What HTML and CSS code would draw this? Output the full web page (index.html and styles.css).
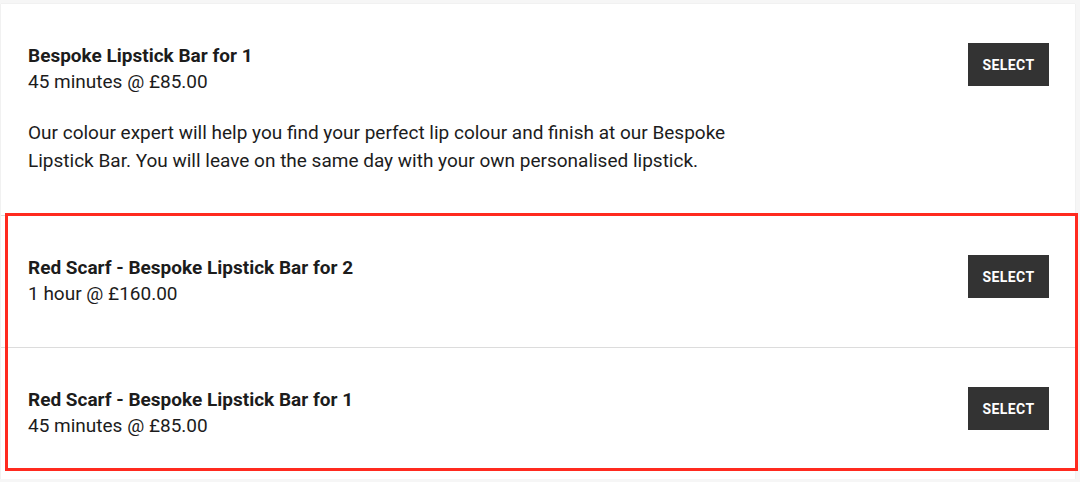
FILE: index.html
```html
<!DOCTYPE html>
<html>
<head>
<meta charset="utf-8">
<link rel="stylesheet" href="styles.css">
</head>
<body>
<div class="card">
  <div class="row">
    <div class="info">
      <div class="title">Bespoke Lipstick Bar for 1</div>
      <div class="meta">45 minutes @ £85.00</div>
      <p class="desc">Our colour expert will help you find your perfect lip colour and finish at our Bespoke Lipstick Bar. You will leave on the same day with your own personalised lipstick.</p>
    </div>
    <button class="btn">SELECT</button>
  </div>
  <div class="group">
    <div class="row">
      <div class="info">
        <div class="title">Red Scarf - Bespoke Lipstick Bar for 2</div>
        <div class="meta">1 hour @ £160.00</div>
      </div>
      <button class="btn">SELECT</button>
    </div>
    <div class="row">
      <div class="info">
        <div class="title">Red Scarf - Bespoke Lipstick Bar for 1</div>
        <div class="meta">45 minutes @ £85.00</div>
      </div>
      <button class="btn">SELECT</button>
    </div>
    <div class="highlight"></div>
  </div>
</div>
</body>
</html>
```

FILE: styles.css
```css
html, body {
  margin: 0;
  padding: 0;
  background: #f6f6f6;
  font-family: Roboto, "Liberation Sans", Arial, sans-serif;
  color: #1c1c1c;
}
.card {
  margin: 4px 5px 0 1px;
  background: #fff;
  box-shadow: 0 0 1px rgba(0,0,0,0.12);
}
.row {
  display: flex;
  align-items: flex-start;
  justify-content: space-between;
  padding: 39px 26px 40px 27px;
  border-top: 1px solid #dcdcdc;
}
.card > .row:first-child {
  border-top: none;
}
.group {
  position: relative;
}
.title {
  font-size: 19px;
  font-weight: 700;
  line-height: 26px;
}
.meta {
  font-size: 19px;
  line-height: 26px;
}
.desc {
  margin: 24px 0 0;
  font-size: 19px;
  line-height: 28px;
  width: 730px;
}
.btn {
  flex: none;
  width: 81px;
  height: 43px;
  border: none;
  background: #333;
  color: #fff;
  font-family: Roboto, "Liberation Sans", Arial, sans-serif;
  font-size: 14px;
  font-weight: 700;
  letter-spacing: 0.4px;
  padding: 0;
}
.highlight {
  position: absolute;
  top: -2px;
  left: 4px;
  right: -3px;
  bottom: 8px;
  border: 3px solid #ff2a1f;
  pointer-events: none;
}
```
